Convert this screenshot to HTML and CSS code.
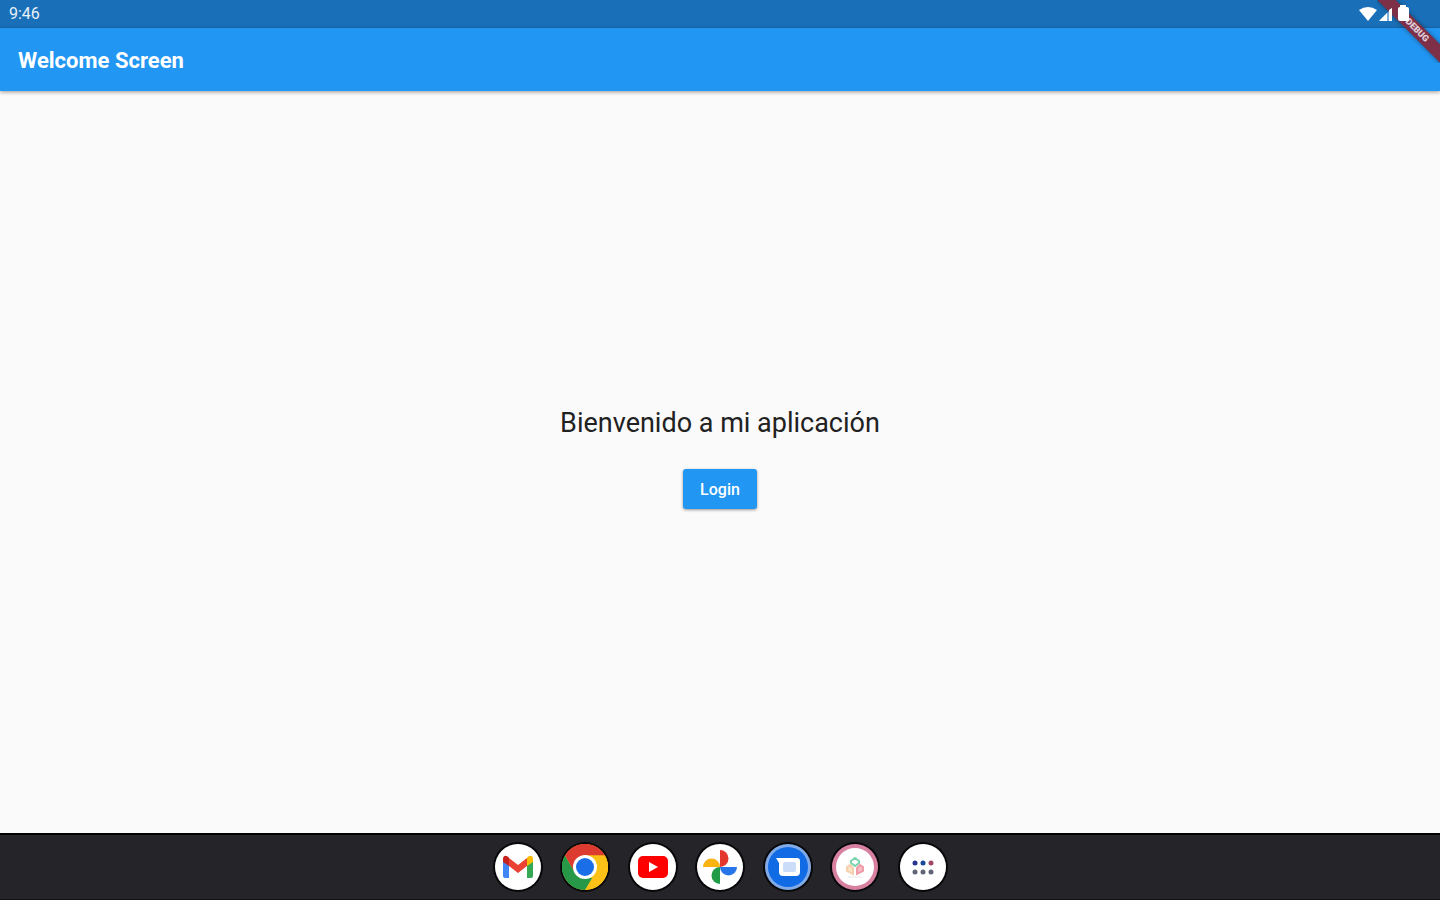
FILE: index.html
```html
<!DOCTYPE html>
<html lang="es">
<head>
<meta charset="UTF-8" />
<meta name="viewport" content="width=device-width, initial-scale=1" />
<title>Welcome Screen</title>
<link rel="stylesheet" href="styles.css">
</head>
<body>
  <div class="status-bar">
    <span class="clock">9:46</span>
    <svg class="status-icons" width="52" height="18" viewBox="0 0 52 18" fill="#fff" aria-hidden="true">
      <path d="M1 5Q10 -1 19 5L10 16Z" />
      <path d="M21 16L34 3V16Z" fill-opacity=".45" />
      <path d="M21 16L29 8V16ZM31 5L34 3V16H31Z" />
      <path d="M42 2V0H48V2H49Q51 2 51 4V14Q51 16 49 16H42Q40 16 40 14V4Q40 2 42 2Z" />
    </svg>
  </div>

  <header class="app-bar">
    <h1>Welcome Screen</h1>
  </header>
  <div class="banner"><span>DEBUG</span></div>

  <main class="content">
    <p class="welcome">Bienvenido a mi aplicación</p>
    <button type="button" class="btn-login">Login</button>
  </main>

  <!-- Barra de aplicaciones -->
  <nav class="dock">
    <div class="apps">
      <button type="button" class="app" aria-label="Gmail">
        <svg viewBox="0 0 46 46">
          <circle cx="23" cy="23" r="23" fill="#fff" />
          <path d="M8 16V32Q8 34 10 34H14V20Z" fill="#4285f4" />
          <path d="M32 20V34H36Q38 34 38 32V16Z" fill="#34a853" />
          <path d="M14 14L23 21L32 14V22L23 29L14 22Z" fill="#ea4335" />
          <path d="M8 15C8 11 12 11 14 14V22L8 18Z" fill="#c5221f" />
          <path d="M38 15C38 11 34 11 32 14V22L38 18Z" fill="#fbbc04" />
        </svg>
      </button>
      <button type="button" class="app" aria-label="Chrome">
        <svg viewBox="0 0 46 46">
          <circle cx="23" cy="23" r="23" fill="#fbc116" />
          <path d="M23 23L13 29L3 11.500A23 23 0 0 1 43 11.500H23Z" fill="#dd3b2f" />
          <path d="M3 11.500L13 29L23 34H33L23 46A23 23 0 0 1 3 11.500Z" fill="#279847" />
          <path d="M33 29L23 46A23 23 0 0 0 43 11.500H23Z" fill="#fbc116" />
          <circle cx="23" cy="23" r="12" fill="#fff" />
          <circle cx="23" cy="23" r="9" fill="#1a6fe8" />
        </svg>
      </button>
      <button type="button" class="app" aria-label="YouTube">
        <svg viewBox="0 0 46 46">
          <circle cx="23" cy="23" r="23" fill="#fff" />
          <rect x="8" y="12" width="30" height="22" rx="5" fill="#f00" />
          <path d="M19 18V28L28 23Z" fill="#fff" />
        </svg>
      </button>
      <button type="button" class="app" aria-label="Fotos">
        <svg viewBox="0 0 46 46">
          <circle cx="23" cy="23" r="23" fill="#fff" />
          <path d="M23 6A8 8 0 0 1 23 23Z" fill="#e3362c" />
          <path d="M40 23A8 8 0 0 1 23 23Z" fill="#2875ea" />
          <path d="M23 40A8 8 0 0 1 23 23Z" fill="#209b48" />
          <path d="M6 23A8 8 0 0 1 23 23Z" fill="#f9b412" />
        </svg>
      </button>
      <button type="button" class="app" aria-label="Mensajes">
        <svg viewBox="0 0 46 46">
          <circle cx="23" cy="23" r="23" fill="#80aae8" />
          <circle cx="23" cy="23" r="20" fill="#116be5" />
          <path d="M11 14H32Q35 14 35 17V28Q35 32 31 32H18Q14 32 14 28V19Z" fill="#fff" />
          <rect x="18" y="18" width="13" height="10" rx="2" fill="#cbdcf8" />
        </svg>
      </button>
      <button type="button" class="app" aria-label="Mi aplicación">
        <svg viewBox="0 0 46 46">
          <circle cx="23" cy="23" r="23" fill="#d780a0" />
          <circle cx="23" cy="23" r="19" fill="#fff" />
          <g fill="none" stroke-width="2">
            <path d="M19 19V17L23 14L27 17V19L23 22Z" stroke="#79d5ad" />
            <path d="M15 23L18 21L21 24V30L15 27Z" fill="#fbe3c8" stroke="#f5cfae" />
            <path d="M31 23L28 21L25 24V30L31 27Z" fill="#f6bcc3" stroke="#ef9ca8" />
          </g>
          <path d="M16 33H30" stroke="#e8e8e8" />
        </svg>
      </button>
      <button type="button" class="app" aria-label="Todas las aplicaciones">
        <svg viewBox="0 0 46 46">
          <circle cx="23" cy="23" r="23" fill="#fff" />
          <circle cx="15" cy="19" r="2.500" fill="#283593" />
          <circle cx="23" cy="19" r="2.500" fill="#174a9c" />
          <circle cx="31" cy="19" r="2.500" fill="#a04867" />
          <g fill="#626575">
            <circle cx="15" cy="28" r="2.500" />
            <circle cx="23" cy="28" r="2.500" />
            <circle cx="31" cy="28" r="2.500" />
          </g>
        </svg>
      </button>
    </div>
  </nav>
</body>
</html>
```
FILE: styles.css
```css
* { box-sizing: border-box; }
body { margin: 0; min-height: 100vh; display: flex; flex-direction: column; position: relative; overflow-x: hidden; font-family: Roboto, sans-serif; background: #fafafa; color: #212121; }
.status-bar { display: flex; justify-content: space-between; align-items: center; height: 28px; padding: 0 30px 0 9px; background: #1a70b8; color: #fff; }
.clock { font-size: 16px; line-height: 28px; opacity: 0.9; }
.status-icons { position: relative; z-index: 2; }
.app-bar { display: flex; align-items: center; height: 63px; padding: 2px 18px 0; background: #2196f3; color: #fff; box-shadow: 0 1px 4px rgba(0, 0, 0, 0.4); }
.app-bar h1 { margin: 0; font-size: 22px; line-height: 28px; font-weight: 700; }

/* cinta diagonal en la esquina */
.banner { position: absolute; top: 0; right: 0; width: 63px; height: 63px; overflow: hidden; pointer-events: none; }
.banner span { position: absolute; top: 24px; left: -15px; width: 110px; height: 13px; transform: rotate(45deg); background: #7d3048; color: #e0d0d8; font-size: 9px; line-height: 13px; font-weight: 900; text-align: center; box-shadow: 0 0 5px rgba(0, 0, 0, 0.4); }

.content { flex: 1; display: flex; flex-direction: column; justify-content: center; align-items: center; gap: 28px; padding-bottom: 10px; }
.welcome { margin: 0; font-size: 27px; line-height: 36px; }
.btn-login { height: 40px; padding: 0 17px; border: none; border-radius: 3px; background: #2196f3; color: #fff; font-family: inherit; font-size: 16px; font-weight: 500; box-shadow: 0 1px 3px rgba(0, 0, 0, 0.4); cursor: pointer; }
.btn-login:hover { background: #1e88e5; }
.dock { display: flex; justify-content: center; align-items: center; height: 67px; border-top: 2px solid #000; border-bottom: 1px solid #111; background: #252429; }
.apps { display: flex; justify-content: space-between; width: 451px; }
.app { width: 46px; height: 46px; padding: 0; border: none; border-radius: 50%; background: none; box-shadow: 0 0 0 2px #08080a; cursor: pointer; }
.app svg { display: block; width: 100%; height: 100%; }
```
